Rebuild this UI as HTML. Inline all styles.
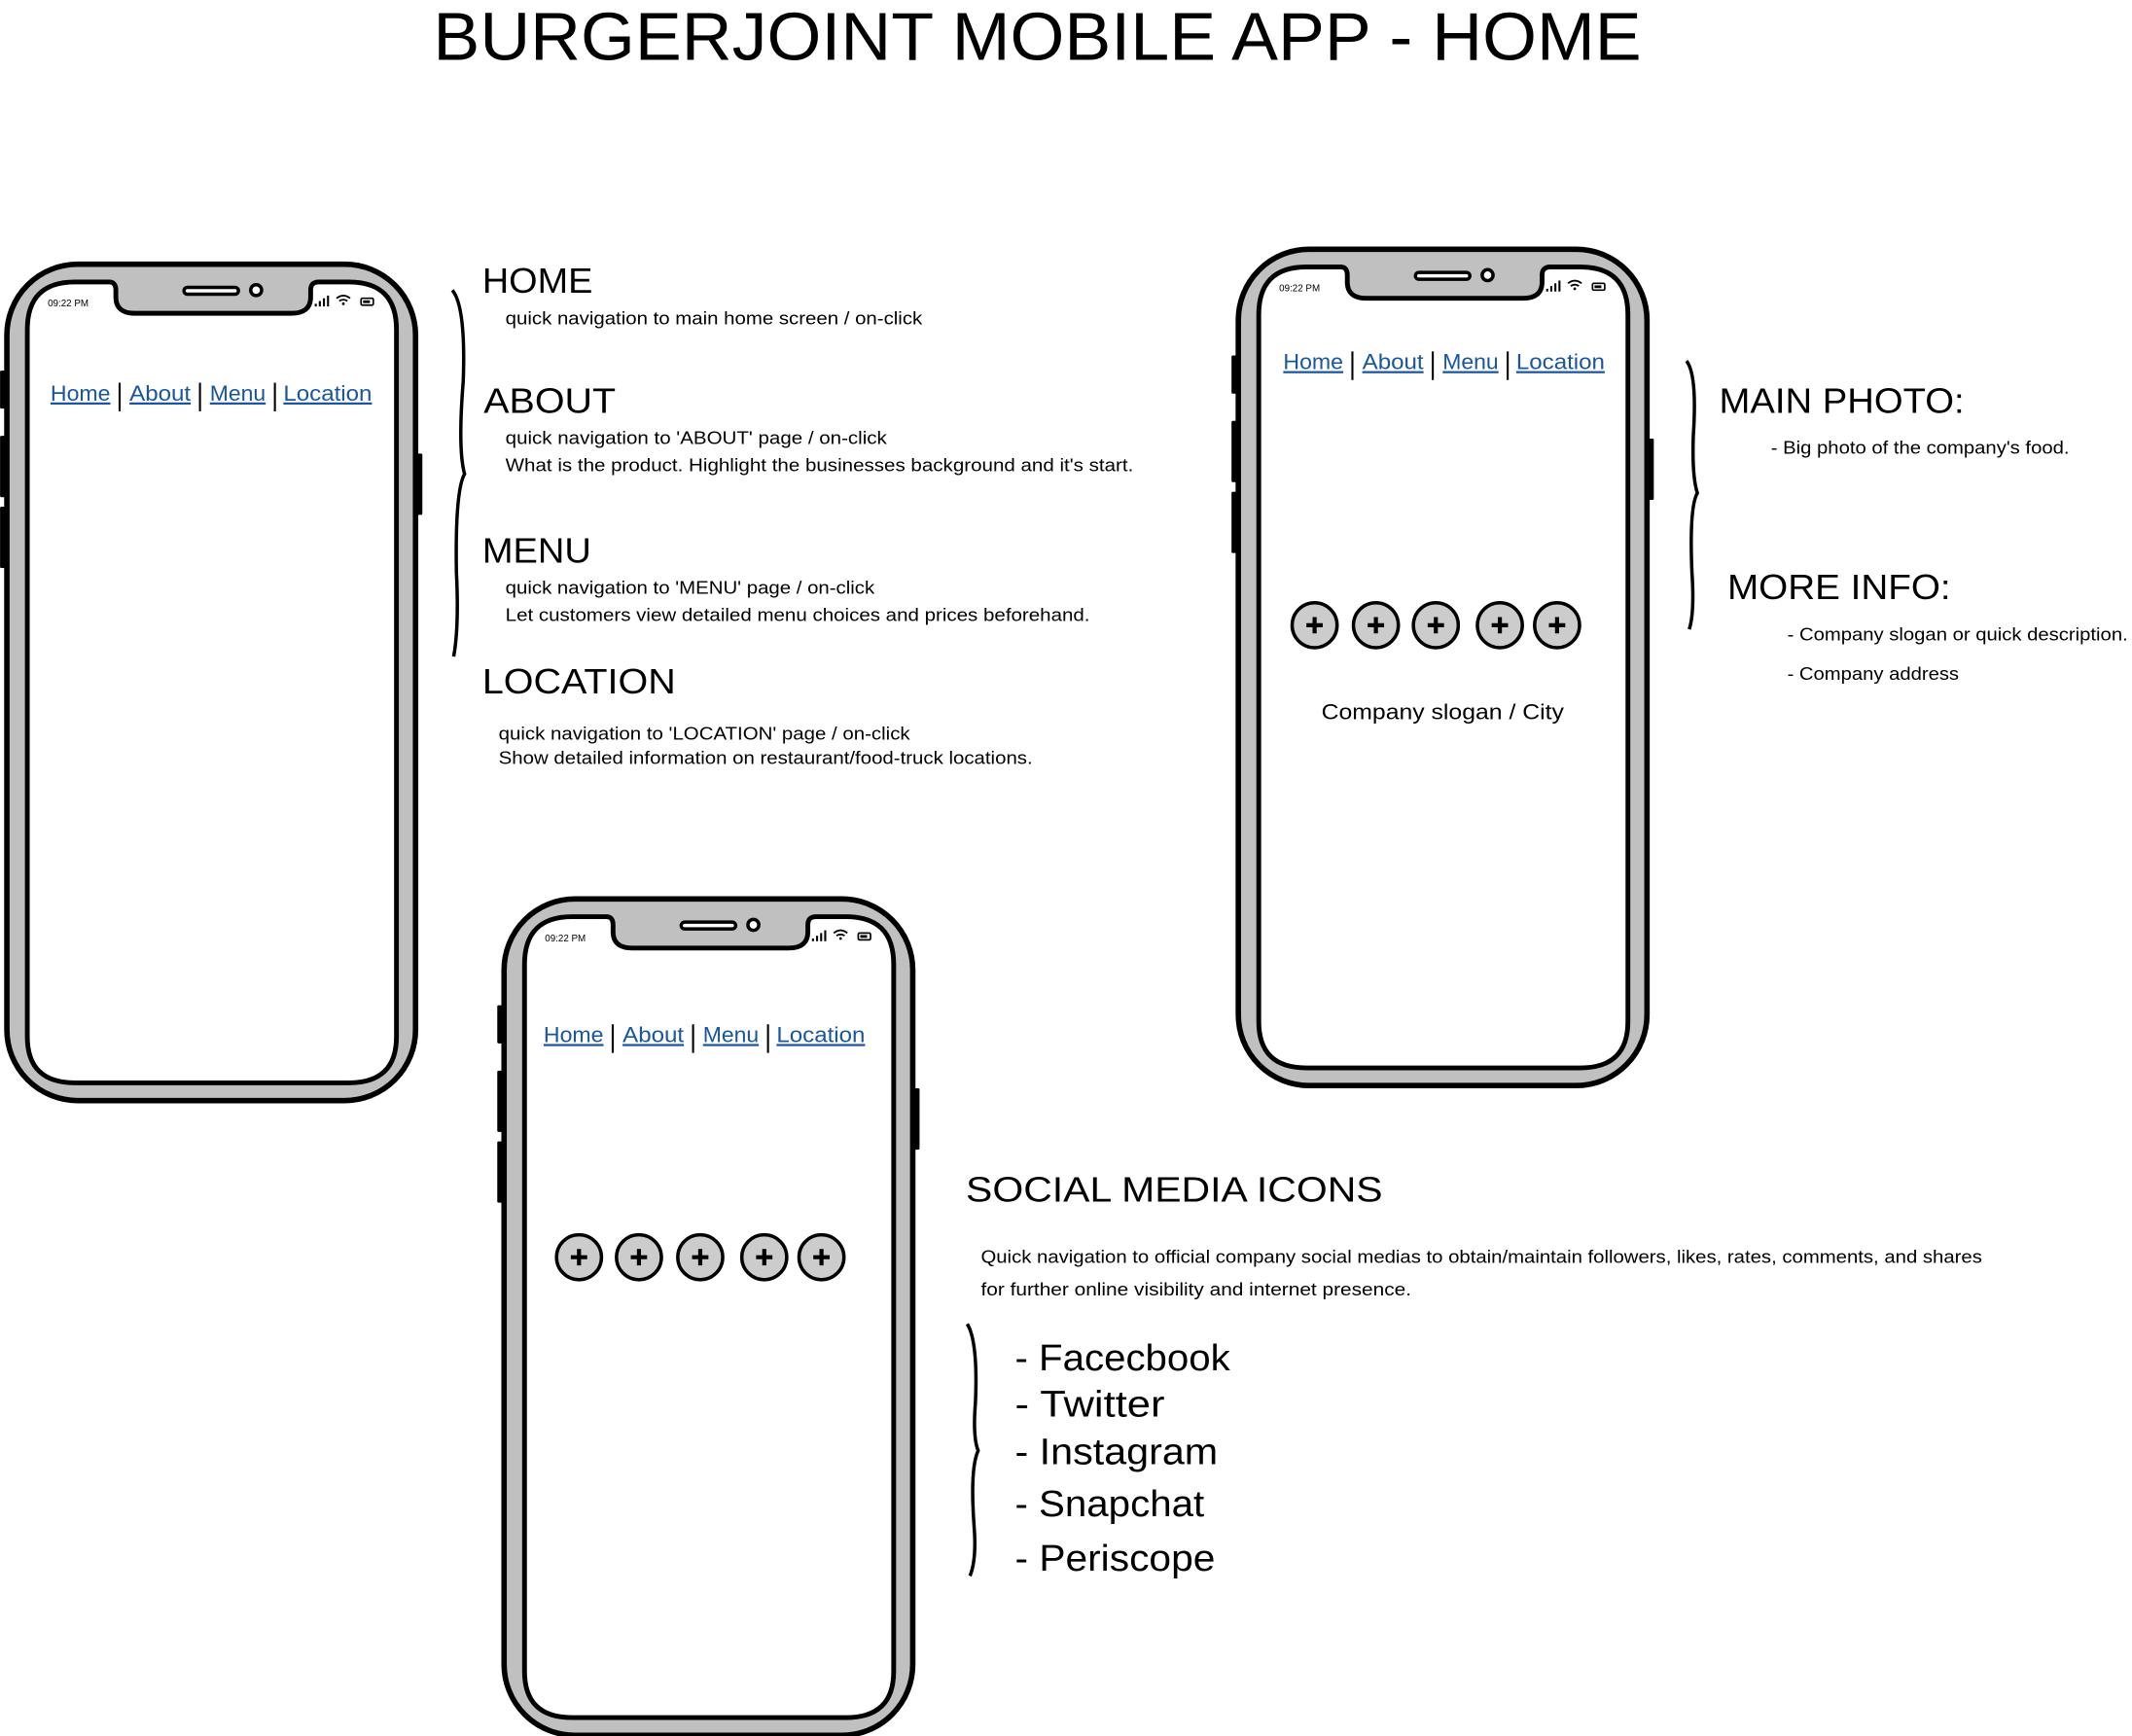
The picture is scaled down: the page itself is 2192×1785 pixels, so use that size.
<!DOCTYPE html>
<html><head><meta charset="utf-8"><style>
html,body{margin:0;padding:0;background:#fff;}
svg{display:block;}
text{font-family:"Liberation Sans",sans-serif;fill:#000;}
.nav{fill:#1a56a0;font-size:16px;text-decoration:underline;}
</style></head><body>
<svg width="2192" height="1785" viewBox="0 0 1565 1274.5" xmlns="http://www.w3.org/2000/svg">
<defs>
<g id="phone">
  <rect x="-3" y="80" width="5" height="28" rx="1" fill="#000"/>
  <rect x="-3" y="128" width="5" height="45" rx="1" fill="#000"/>
  <rect x="-3" y="180" width="5" height="45" rx="1" fill="#000"/>
  <rect x="302" y="141" width="5" height="45" rx="1" fill="#000"/>
  <rect x="2" y="2" width="300" height="614" rx="52" fill="#c0c0c0" stroke="#000" stroke-width="4"/>
  <path d="M52,15 H77 Q82,15 82,21 V26 Q82,38 96,38 H211 Q225,38 225,26 V21 Q225,15 231,15 H253 Q288,15 288,50 V569 Q288,603 253,603 H52 Q17,603 17,569 V50 Q17,15 52,15 Z" fill="#fff" stroke="#000" stroke-width="3.5"/>
  <rect x="132" y="19" width="40" height="5" rx="2.5" fill="#fff" stroke="#000" stroke-width="2.5"/>
  <circle cx="185" cy="21" r="4" fill="#fff" stroke="#000" stroke-width="2.5"/>
  <text x="32" y="33" font-size="7">09:22 PM</text>
  <rect x="228" y="31" width="1.5" height="2" fill="#000"/><rect x="231" y="29" width="1.5" height="4" fill="#000"/><rect x="234" y="27" width="1.5" height="6" fill="#000"/><rect x="237" y="25" width="1.5" height="8" fill="#000"/>
  <path d="M244,27 Q249,23 254,27 M246,29 Q249,27 252,29" fill="none" stroke="#000" stroke-width="1.3"/><circle cx="249" cy="31" r="1" fill="#000"/>
  <rect x="262" y="27" width="9" height="5" rx="1" fill="none" stroke="#000" stroke-width="1.2"/><rect x="263.5" y="28.5" width="5" height="2" fill="#000"/>
</g>
<g id="nav">
  <text class="nav" x="0" y="0" textLength="44" lengthAdjust="spacingAndGlyphs">Home</text>
  <rect x="50" y="-13" width="1.5" height="21" fill="#000"/>
  <text class="nav" x="58" y="0" textLength="45" lengthAdjust="spacingAndGlyphs">About</text>
  <rect x="109" y="-13" width="1.5" height="21" fill="#000"/>
  <text class="nav" x="117" y="0" textLength="41" lengthAdjust="spacingAndGlyphs">Menu</text>
  <rect x="164" y="-13" width="1.5" height="21" fill="#000"/>
  <text class="nav" x="171" y="0" textLength="65" lengthAdjust="spacingAndGlyphs">Location</text>
</g>
<g id="plus">
  <circle r="16.5" fill="#ccc" stroke="#000" stroke-width="2.5"/>
  <path d="M-6,0 H6 M0,-6 V6" stroke="#000" stroke-width="3"/>
</g>
</defs>

<text x="318" y="44" font-size="50" textLength="887" lengthAdjust="spacingAndGlyphs">BURGERJOINT MOBILE APP - HOME</text>

<use href="#phone" transform="translate(3,192)"/>
<use href="#nav" transform="translate(37,294)"/>

<use href="#phone" transform="translate(907,181)"/>
<use href="#nav" transform="translate(942,271)"/>
<use href="#plus" x="965" y="459"/><use href="#plus" x="1010" y="459"/><use href="#plus" x="1054" y="459"/><use href="#plus" x="1101" y="459"/><use href="#plus" x="1143" y="459"/>
<text x="970" y="528" font-size="16" textLength="178" lengthAdjust="spacingAndGlyphs">Company slogan / City</text>

<use href="#phone" transform="translate(368,658)"/>
<use href="#nav" transform="translate(399,765)"/>
<use href="#plus" x="425" y="923"/><use href="#plus" x="469" y="923"/><use href="#plus" x="514" y="923"/><use href="#plus" x="561" y="923"/><use href="#plus" x="603" y="923"/>

<path d="M332,213 Q342,225 340,280 Q336,330 341,348 Q334,360 335,420 Q337,460 333,482" fill="none" stroke="#000" stroke-width="2.5"/>
<path d="M1238,265 Q1246,275 1243,320 Q1242,350 1246,362 Q1240,372 1242,420 Q1244,450 1240,462" fill="none" stroke="#000" stroke-width="2.5"/>
<path d="M710,972 Q718,985 716,1030 Q714,1055 718,1065 Q712,1078 715,1120 Q717,1145 712,1157" fill="none" stroke="#000" stroke-width="2.5"/>

<text x="354" y="215" font-size="26" textLength="81" lengthAdjust="spacingAndGlyphs">HOME</text>
<text x="371" y="238" font-size="13" textLength="306" lengthAdjust="spacingAndGlyphs">quick navigation to main home screen / on-click</text>
<text x="355" y="303" font-size="26" textLength="97" lengthAdjust="spacingAndGlyphs">ABOUT</text>
<text x="371" y="326" font-size="13" textLength="280" lengthAdjust="spacingAndGlyphs">quick navigation to 'ABOUT' page / on-click</text>
<text x="371" y="346" font-size="13" textLength="461" lengthAdjust="spacingAndGlyphs">What is the product. Highlight the businesses background and it's start.</text>
<text x="354" y="413" font-size="26" textLength="80" lengthAdjust="spacingAndGlyphs">MENU</text>
<text x="371" y="436" font-size="13" textLength="271" lengthAdjust="spacingAndGlyphs">quick navigation to 'MENU' page / on-click</text>
<text x="371" y="456" font-size="13" textLength="429" lengthAdjust="spacingAndGlyphs">Let customers view detailed menu choices and prices beforehand.</text>
<text x="354" y="509" font-size="26" textLength="142" lengthAdjust="spacingAndGlyphs">LOCATION</text>
<text x="366" y="543" font-size="13" textLength="302" lengthAdjust="spacingAndGlyphs">quick navigation to 'LOCATION' page / on-click</text>
<text x="366" y="561" font-size="13" textLength="392" lengthAdjust="spacingAndGlyphs">Show detailed information on restaurant/food-truck locations.</text>

<text x="1262" y="303" font-size="26" textLength="180" lengthAdjust="spacingAndGlyphs">MAIN PHOTO:</text>
<text x="1300" y="333" font-size="13" textLength="219" lengthAdjust="spacingAndGlyphs">- Big photo of the company's food.</text>
<text x="1268" y="440" font-size="26" textLength="164" lengthAdjust="spacingAndGlyphs">MORE INFO:</text>
<text x="1312" y="470" font-size="13" textLength="250" lengthAdjust="spacingAndGlyphs">- Company slogan or quick description.</text>
<text x="1312" y="499" font-size="13" textLength="126" lengthAdjust="spacingAndGlyphs">- Company address</text>

<text x="709" y="882" font-size="26" textLength="306" lengthAdjust="spacingAndGlyphs">SOCIAL MEDIA ICONS</text>
<text x="720" y="927" font-size="13" textLength="735" lengthAdjust="spacingAndGlyphs">Quick navigation to official company social medias to obtain/maintain followers, likes, rates, comments, and shares</text>
<text x="720" y="951" font-size="13" textLength="316" lengthAdjust="spacingAndGlyphs">for further online visibility and internet presence.</text>
<text x="745" y="1006" font-size="27" textLength="158" lengthAdjust="spacingAndGlyphs">- Facecbook</text>
<text x="745" y="1040" font-size="27" textLength="110" lengthAdjust="spacingAndGlyphs">- Twitter</text>
<text x="745" y="1075" font-size="27" textLength="149" lengthAdjust="spacingAndGlyphs">- Instagram</text>
<text x="745" y="1113" font-size="27" textLength="139" lengthAdjust="spacingAndGlyphs">- Snapchat</text>
<text x="745" y="1153" font-size="27" textLength="147" lengthAdjust="spacingAndGlyphs">- Periscope</text>
</svg>
</body></html>
